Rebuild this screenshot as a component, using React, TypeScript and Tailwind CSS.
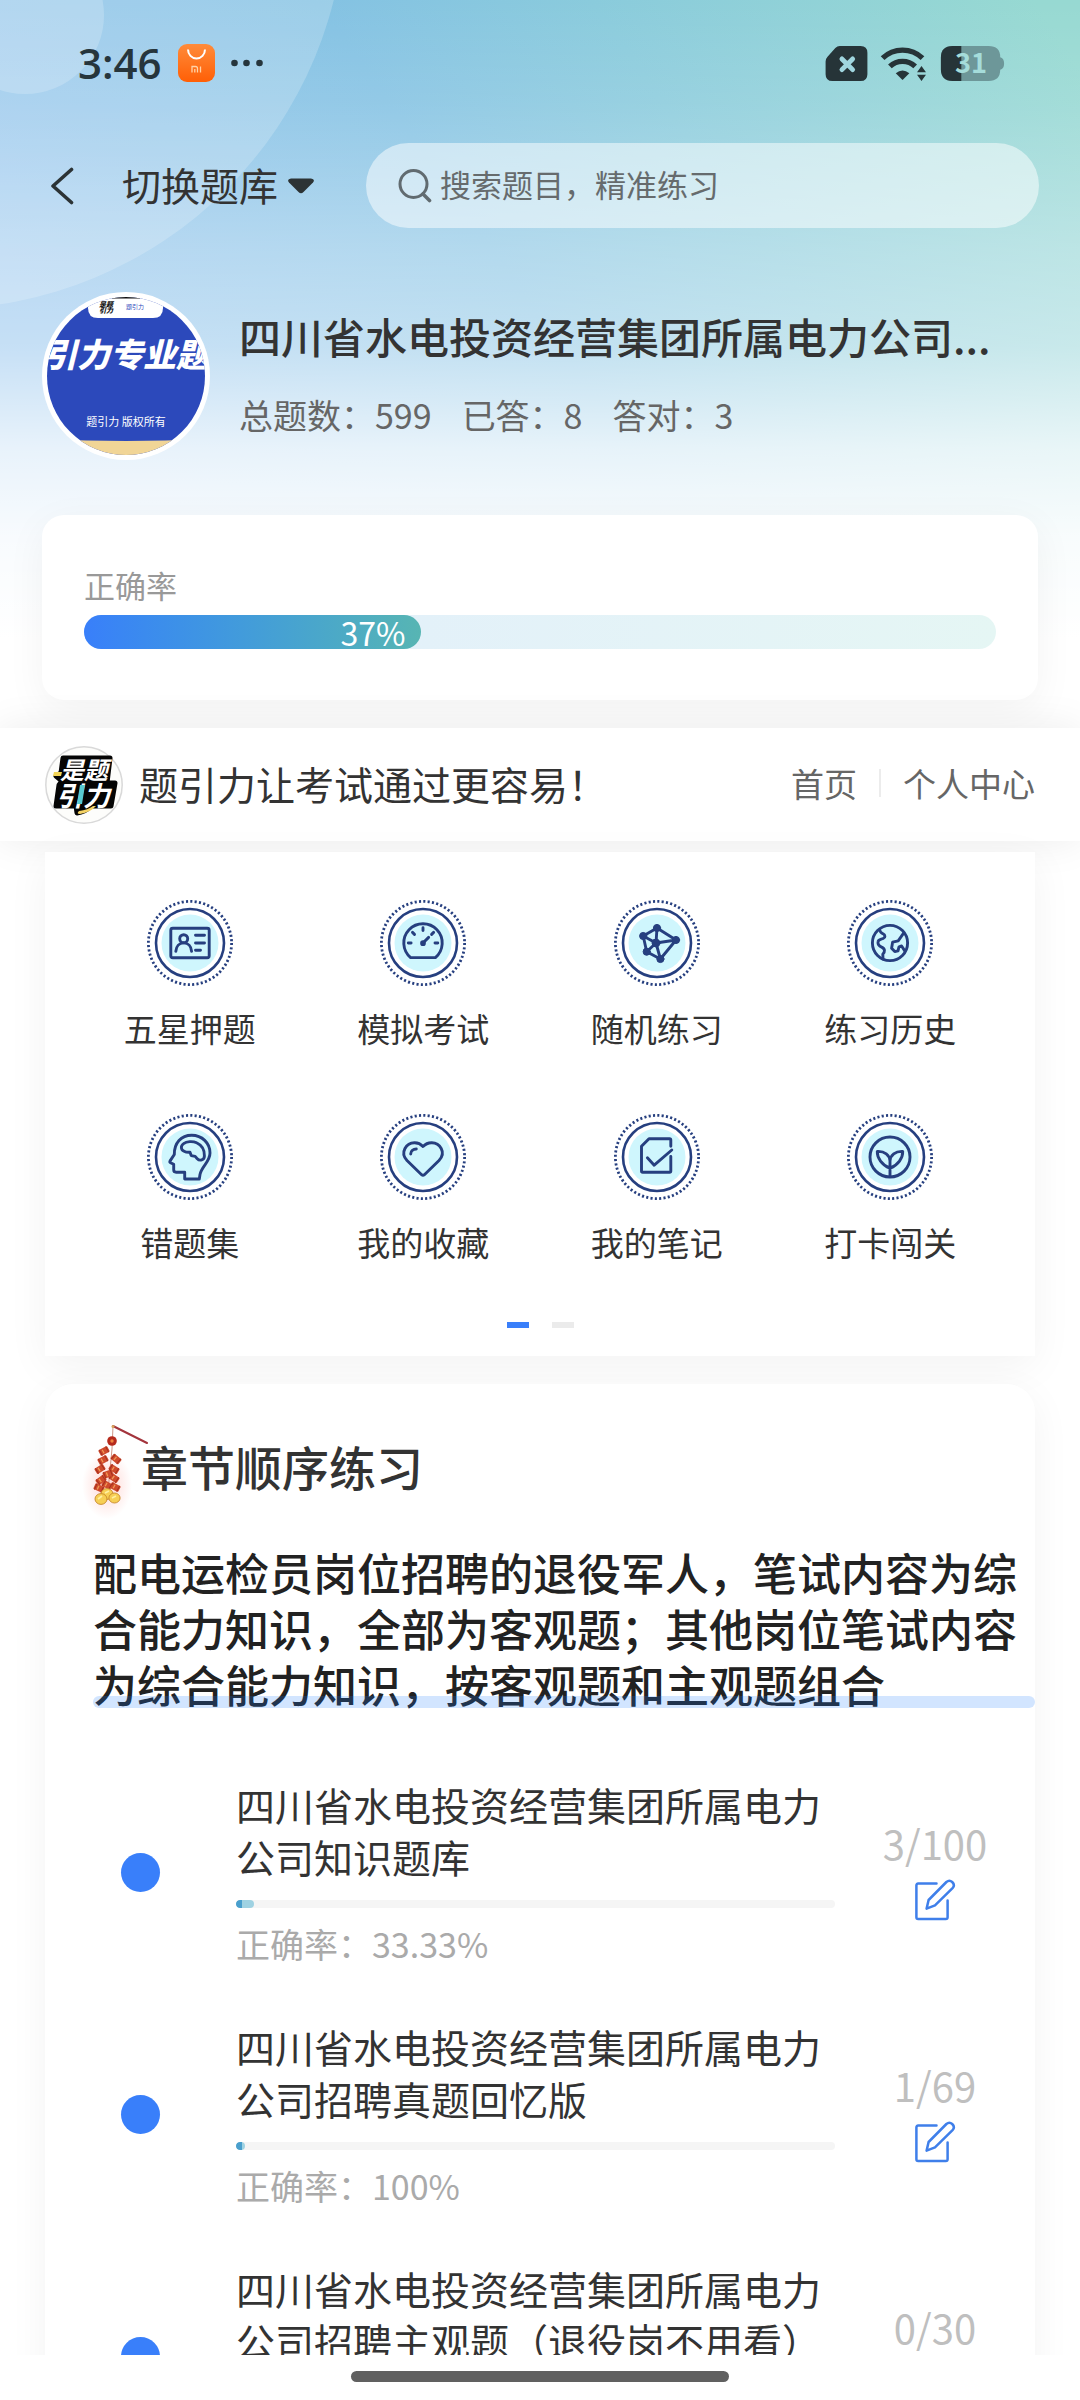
import type { ReactNode } from "react";

type Shortcut = {
  label: string;
  icon: ReactNode;
};

type Chapter = {
  title: string;
  done: number;
  total: number;
  accuracy?: string;
};

const SHORTCUTS: Shortcut[] = [
  {
    label: "五星押题",
    icon: (
      <>
        <rect x="24.8" y="29.2" width="38.4" height="29.6" rx="2" />
        <circle cx="37.7" cy="39.7" r="4" />
        <path d="M29.8 52.3c.4-5 3.6-8.4 7.9-8.4s7.5 3.4 7.9 8.4M49.5 36.3h9M49.5 44h9M49.5 51.2h5" />
      </>
    ),
  },
  {
    label: "模拟考试",
    icon: (
      <>
        <path d="M31.6 58.6a19.2 19.2 0 1 1 24.8 0z" />
        <path d="M29.3 44h2.8M56 44h2.8M44 28.8v2.8M33.5 33.4l2 2M54.6 33.4l-2 2M44 44l5.6-5.6" />
        <circle cx="44" cy="44.2" r="1.4" fill="#263f7f" />
      </>
    ),
  },
  {
    label: "随机练习",
    icon: (
      <>
        <path d="M44 29 30.2 37l3.5 15.7 13.7 7.3L63 41zM43 44l1-15M43 44l-12.8-7M43 44l20-3M43 44l4.4 16M43 44l-9.3 8.7" />
        <g fill="#263f7f" strokeWidth="1">
          <circle cx="44" cy="29" r="3.6" />
          <circle cx="30.2" cy="37" r="3.6" />
          <circle cx="63" cy="41" r="3.6" />
          <circle cx="47.4" cy="60" r="3.6" />
          <circle cx="33.7" cy="52.7" r="3.6" />
          <circle cx="43" cy="44" r="4" />
        </g>
      </>
    ),
  },
  {
    label: "练习历史",
    icon: (
      <>
        <circle cx="44" cy="44" r="17.6" />
        <path d="M33.6 30.6c.4 2.8 1.8 3.4 3.4 4.2 2.4 1.3 2.6 3.6.2 4.7-2.2 1-5 .6-5.2 3.4-.3 3.2 1.2 4.2 3.6 5.2 3.6 1.5 3.6 4.6 1.2 7.2l.2 4.6M57.6 34.2l-5.4 7.6-5.6 1.4-1 6 3.2 3.4 3.2-.8 1-4 2.6-.8 3 4.6" />
      </>
    ),
  },
  {
    label: "错题集",
    icon: (
      <>
        <path d="M38.7 66v-6.8h-8.6c-1.6 0-2.4-.8-2.4-2.4v-5.5l-3.2-1.6c-.8-.4-.8-1-.4-1.8l4.2-6.4C28.3 30 35 22.3 45.7 22.3 56 22.3 64 30 64 40c0 9-8.4 13-10 21.5l-.7 4.5z" />
        <path d="M38 38.2c-3.2-1.2-3.6-5.4-.4-7.6 3-2.2 9-2.8 13-.8 5.2 2.4 8 7.4 7.8 13.2-.1 4.2-4.6 5.4-7.4 2.4l-1.8-2-4-.8-1.2-3.4c-2 .2-4.4-.2-6-1z" />
      </>
    ),
  },
  {
    label: "我的收藏",
    icon: (
      <>
        <path d="M42.6 61.7 28 47.5C20.5 39.5 27.5 29.5 35.7 29.7c3.6.1 6.2 1.5 8.3 3.7 2.1-2.2 4.9-3.6 8.5-3.7 8.2-.2 15.2 9.8 7.5 17.8L45.4 61.7c-.9.8-1.9.8-2.8 0z" />
        <path d="M31.7 41c0-3 2.6-5 5.6-5" />
      </>
    ),
  },
  {
    label: "我的笔记",
    icon: (
      <>
        <path d="M57.8 33.2v-6.3c0-.8-.4-1.2-1.2-1.2H36l-7.5 7.6v24.7c0 .8.4 1.2 1.2 1.2h26.9c.8 0 1.2-.4 1.2-1.2V43.5" />
        <path d="m34.4 44.7 6.8 7.5 17.6-15.2" />
      </>
    ),
  },
  {
    label: "打卡闯关",
    icon: (
      <>
        <circle cx="44" cy="44" r="20" />
        <path d="M44 63.5V47M43.8 55.2C36 52 31 45 31.3 38.4 38.5 38 43.8 42 44 48M44.2 55.2C52 52 57 45 56.7 38.4 49.5 38 44.2 42 44 48" />
      </>
    ),
  },
];

const CHAPTERS: Chapter[] = [
  {
    title: "四川省水电投资经营集团所属电力公司知识题库",
    done: 3,
    total: 100,
    accuracy: "33.33%",
  },
  {
    title: "四川省水电投资经营集团所属电力公司招聘真题回忆版",
    done: 1,
    total: 69,
    accuracy: "100%",
  },
  {
    title: "四川省水电投资经营集团所属电力公司招聘主观题（退役岗不用看）",
    done: 0,
    total: 30,
    accuracy: "0%",
  },
];

export default function App() {
  return (
    <div
      lang="zh-CN"
      className="flex h-screen flex-col bg-white font-['Noto_Sans_CJK_SC',sans-serif] text-[#333]"
    >
      <main className="relative min-h-0 flex-1 overflow-x-hidden overflow-y-auto [scrollbar-width:none]">
        <HeaderBackdrop />
        <div className="relative">
          <StatusBar />
          <TopNav />
          <BankSummary />
          <AccuracyCard percent={37} />
          <BrandBar />
          <ShortcutGrid />
          <ChapterSection />
        </div>
      </main>
      <div className="flex h-[45px] flex-none justify-center bg-white pt-4">
        <div className="h-[11px] w-[35%] rounded-full bg-[#606060]" />
      </div>
    </div>
  );
}

function HeaderBackdrop() {
  return (
    <div className="absolute inset-x-0 top-0 h-[640px] overflow-hidden bg-[linear-gradient(to_bottom,rgba(255,255,255,0)_0%,rgba(255,255,255,0.12)_16%,rgba(255,255,255,0.38)_39%,rgba(255,255,255,0.5)_54%,rgba(255,255,255,0.8)_70%,rgba(255,255,255,0.94)_84%,#fff_100%),linear-gradient(55deg,#8cc0ec_18%,#84c2e3_50%,#8acbdc_68%,#97d9d2_97%)]">
      <svg width="400" height="400" viewBox="0 0 400 400" fill="#fff" aria-hidden="true">
        <circle cx="-62" cy="-99" r="408" fillOpacity="0.2" />
        <circle cx="25" cy="15" r="79" fillOpacity="0.2" />
      </svg>
    </div>
  );
}

function StatusBar() {
  return (
    <div className="flex h-[126px] items-center justify-between pr-[75px] pl-[78px] text-[#26353c]">
      <div className="flex items-center gap-4">
        <span className="font-['Open_Sans','Noto_Sans_CJK_SC',sans-serif] text-[42px] leading-[58px] font-semibold">
          3:46
        </span>
        <svg width="37" height="38" viewBox="0 0 37 38" aria-hidden="true">
          <defs>
            <linearGradient id="shop" x1="0" y1="0" x2="0" y2="1">
              <stop offset="0" stopColor="#ff8b3a" />
              <stop offset="1" stopColor="#ff5f06" />
            </linearGradient>
          </defs>
          <rect width="37" height="38" rx="9" fill="url(#shop)" />
          <path d="M10 5.5a8.5 9 0 0 0 17 0" fill="none" stroke="#fff" strokeWidth="2" />
          <path
            d="M14 28.5v-6h3.500q2 0 2 2v4M16.8 25v3.5M22.5 22.5v6"
            fill="none"
            stroke="#ffd3a8"
            strokeWidth="1.3"
          />
        </svg>
        <svg width="32" height="8" viewBox="0 0 32 8" fill="currentColor" aria-hidden="true">
          <circle cx="3.5" cy="4" r="3.3" />
          <circle cx="15.5" cy="4" r="3.3" />
          <circle cx="28.5" cy="4" r="3.3" />
        </svg>
      </div>
      <div className="flex items-center gap-3">
        <svg width="43" height="35" viewBox="0 0 43 36" aria-hidden="true">
          <path
            d="M14.5 0H36q7 0 7 7v22q0 7-7 7H7q-7 0-7-7V16q0-3 2-5l8-9q2-2 4.5-2z"
            fill="#263438"
          />
          <path
            d="m16.8 13.3 11 11m0-11-11 11"
            stroke="#a0d6df"
            strokeWidth="5"
            strokeLinecap="round"
          />
        </svg>
        <svg width="48" height="35" viewBox="0 0 48 36" aria-hidden="true">
          <g fill="none" stroke="#263438" strokeWidth="5.5">
            <path d="M2 12.5a29.5 29.5 0 0 1 41 0" />
            <path d="M9.5 21a19 19 0 0 1 26 0" />
          </g>
          <path d="M22.5 35 15.5 28q7-5.5 14 0z" fill="#263438" />
          <path d="m42 20.5 4.6 6.5h-9.2zM42 36l4.6-6.5h-9.2z" fill="#263438" />
        </svg>
        <svg width="65" height="35" viewBox="0 0 65 36" role="img" aria-label="31%">
          <path
            d="M12 0h37q12 0 12 11.5 4 1 4 6.5t-4 6.5Q61 36 49 36H12Q0 36 0 24V12Q0 0 12 0z"
            fill="#6d9799"
          />
          <path d="M12 0h9v36h-9Q0 36 0 24V12Q0 0 12 0z" fill="#263438" />
          <text
            x="31"
            y="28"
            textAnchor="middle"
            fill="#a5dcda"
            fontSize="28"
            fontWeight="700"
            fontFamily="Noto Sans CJK SC, sans-serif"
          >
            31
          </text>
        </svg>
      </div>
    </div>
  );
}

function TopNav() {
  return (
    <nav className="flex items-center pt-[17px] pr-[41px] pl-[50px]">
      <button type="button" aria-label="返回" className="flex-none">
        <svg width="24" height="38" viewBox="0 0 24 38" fill="none" aria-hidden="true">
          <path
            d="M21.5 2.5 3 19l18.5 16.5"
            stroke="#2c3335"
            strokeWidth="3.6"
            strokeLinecap="round"
            strokeLinejoin="round"
          />
        </svg>
      </button>
      <button type="button" className="ml-12 flex flex-none items-center gap-[10px]">
        <span className="pb-1 text-[39px] leading-[52px]">切换题库</span>
        <svg width="26" height="16" viewBox="0 0 26 16" fill="#2c3335" aria-hidden="true">
          <path d="M3 .5h20q4.5.5 2 4l-9.5 9.5q-2.5 2.5-5 0L1 4.5q-2.5-3.5 2-4z" />
        </svg>
      </button>
      <label className="ml-[52px] flex h-[85px] min-w-0 flex-1 items-center gap-2 rounded-full bg-white/50 pl-8 text-[#616b70]">
        <svg
          width="34"
          height="36"
          viewBox="0 0 34 36"
          fill="none"
          stroke="currentColor"
          className="flex-none"
          aria-hidden="true"
        >
          <circle cx="15.5" cy="16" r="13.5" strokeWidth="3" />
          <path d="m25 26 6.5 6.5" strokeWidth="3.6" strokeLinecap="round" />
        </svg>
        <input
          type="search"
          aria-label="搜索题目"
          placeholder="搜索题目，精准练习"
          className="min-w-0 flex-1 bg-transparent pb-1 text-[31px] leading-[48px] outline-none placeholder:text-[#666b6d]"
        />
      </label>
    </nav>
  );
}

function BankSummary() {
  return (
    <section className="flex gap-[29px] px-[42px] pt-16">
      <BankCover />
      <div className="min-w-0 flex-1 pt-[13px]">
        <h1 className="truncate text-[42px] leading-[62px] font-medium">
          四川省水电投资经营集团所属电力公司...
        </h1>
        <p className="mt-[26px] flex gap-[30px] text-[34px] leading-[44px] whitespace-nowrap text-[#666]">
          <span>总题数：599</span>
          <span>已答：8</span>
          <span>答对：3</span>
        </p>
      </div>
    </section>
  );
}

function BankCover() {
  return (
    <svg
      width="168"
      height="168"
      viewBox="0 0 168 168"
      className="flex-none"
      fontFamily="Noto Sans CJK SC, sans-serif"
      role="img"
      aria-label="引力专业题"
    >
      <defs>
        <clipPath id="cover">
          <circle cx="84" cy="84" r="79" />
        </clipPath>
      </defs>
      <circle cx="84" cy="84" r="84" fill="#fff" />
      <g clipPath="url(#cover)">
        <rect width="168" height="168" fill="#2c49bb" />
        <path d="M46 0h75v16q0 10-10 10H56Q46 26 46 16z" fill="#fff" />
        <path d="M70 5.5h28" stroke="#111" strokeWidth="2" />
        <text x="57" y="15" fontSize="7" fontWeight="900" fontStyle="italic" fill="#111">
          是题
        </text>
        <text x="57" y="21" fontSize="7" fontWeight="900" fontStyle="italic" fill="#111">
          引力
        </text>
        <text x="84" y="17" fontSize="6" fill="#2c49bb">
          题引力
        </text>
        <text x="2" y="75" fontSize="33" fontWeight="900" fontStyle="italic" fill="#fff">
          引力专业题
        </text>
        <text x="84" y="134" fontSize="11" textAnchor="middle" fill="#fff">
          题引力 版权所有
        </text>
        <path d="M0 147q84 4 168 0v21H0z" fill="#f1d596" />
      </g>
    </svg>
  );
}

function AccuracyCard({ percent }: { percent: number }) {
  return (
    <section className="mx-[42px] mt-[55px] rounded-[22px] bg-white px-[42px] pt-12 pb-[51px] shadow-[0_10px_40px_rgba(0,0,0,0.05)]">
      <h2 className="text-[31px] leading-[44px] text-[#999]">正确率</h2>
      <div
        role="progressbar"
        aria-label="正确率"
        aria-valuenow={percent}
        className="mt-2 h-[34px] rounded-full bg-linear-to-r from-[#e2eefc] to-[#e5f6f4]"
      >
        <div
          className="flex h-full items-center justify-end rounded-full bg-linear-to-r from-[#397ffa] to-[#57b5b3] pr-4 text-[32px] leading-[34px] text-white"
          style={{ width: `${percent}%` }}
        >
          {percent}%
        </div>
      </div>
    </section>
  );
}

function BrandBar() {
  return (
    <section className="mt-7 flex h-[113px] items-center bg-white px-[45px] shadow-[0_0_40px_rgba(0,0,0,0.08)]">
      <BrandLogo />
      <p className="ml-4 flex-1 pb-1 text-[39px] leading-[52px] whitespace-nowrap">
        题引力让考试通过更容易！
      </p>
      <div className="flex items-center pb-1 text-[33px] leading-[44px] whitespace-nowrap text-[#666]">
        <a href="#home">首页</a>
        <span className="mx-[22px] h-7 w-[2px] bg-[#ececec]" />
        <a href="#me">个人中心</a>
      </div>
    </section>
  );
}

function BrandLogo() {
  return (
    <svg
      width="78"
      height="78"
      viewBox="0 0 78 78"
      className="flex-none"
      fontFamily="Noto Sans CJK SC, sans-serif"
      fontWeight="700"
      fontStyle="italic"
      role="img"
      aria-label="是题引力"
    >
      <circle cx="39" cy="39" r="38.2" fill="#fdfdfb" stroke="#d9d9d9" strokeWidth="1.5" />
      <path
        d="M18 12h47l-3 25h8l-4 23H46q-6 6-14 7l-1-7H11l3-21 3-4-6-5 5-3z"
        fill="#050505"
        stroke="#050505"
        strokeWidth="5"
        strokeLinejoin="round"
      />
      <path d="M9 26h8l-1 4H8z" fill="#f2d455" />
      <path d="M34 65q9-1 14-5h3q-5 6-16 8-4 0-1-3z" fill="#f5d365" />
      <text x="15" y="33" fontSize="24" fill="#fff">
        是题
      </text>
      <text x="11" y="60" fontSize="27" fill="#fff">
        引力
      </text>
      <path d="M35 39h5l-3 19h-5z" fill="#58cbd2" />
    </svg>
  );
}

function ShortcutGrid() {
  return (
    <section className="mx-[45px] mt-[11px] bg-white px-7 pt-[47px] pb-7 shadow-[0_10px_40px_rgba(0,0,0,0.05)]">
      <div className="grid grid-cols-4 gap-y-14">
        {SHORTCUTS.map((s) => (
          <button key={s.label} type="button" className="flex flex-col items-center">
            <svg
              width="88"
              height="88"
              viewBox="0 0 88 88"
              fill="none"
              stroke="#263f7f"
              strokeWidth="2.9"
              strokeLinecap="round"
              strokeLinejoin="round"
              aria-hidden="true"
            >
              <circle
                cx="44"
                cy="44"
                r="41.6"
                strokeWidth="2.8"
                strokeLinecap="butt"
                strokeDasharray="2.1 2.256"
              />
              <circle cx="44" cy="44" r="34" strokeWidth="2.6" />
              <circle cx="44" cy="44" r="28.5" fill="#cff6fd" stroke="none" />
              {s.icon}
            </svg>
            <span className="mt-3 text-[33px] leading-[58px]">{s.label}</span>
          </button>
        ))}
      </div>
      <div className="mt-[51px] flex justify-center gap-[23px]">
        <span className="h-[6px] w-[22px] bg-[#397ffa]" />
        <span className="h-[6px] w-[22px] bg-[#ebebeb]" />
      </div>
    </section>
  );
}

function ChapterSection() {
  return (
    <section className="mx-[45px] mt-7 rounded-[28px] bg-white pt-10 pb-14 shadow-[0_10px_40px_rgba(0,0,0,0.05)]">
      <div className="flex items-center pl-12">
        <Firecracker />
        <h2 className="text-[47px] leading-[84px] font-medium">章节顺序练习</h2>
      </div>
      <p className="relative mt-9 ml-12 text-[44px] leading-[56px] font-medium text-[#222]">
        配电运检员岗位招聘的退役军人，笔试内容为综合能力知识，全部为客观题；其他岗位笔试内容为综合能力知识，按客观题和主观题组合
        <span className="absolute inset-x-0 bottom-1 h-3 rounded-full bg-[#1f7bff]/20" />
      </p>
      <ul className="mt-[66px] flex flex-col gap-[54px]">
        {CHAPTERS.map((c) => (
          <ChapterRow key={c.title} chapter={c} />
        ))}
      </ul>
    </section>
  );
}

function ChapterRow({ chapter }: { chapter: Chapter }) {
  const { title, done, total, accuracy } = chapter;
  return (
    <li className="flex items-center">
      <div className="flex w-[191px] flex-none justify-center">
        <span className="h-[39px] w-[39px] rounded-full bg-[#397ffa]" />
      </div>
      <div className="min-w-0 flex-1">
        <h3 className="text-[39px] leading-[52px]">{title}</h3>
        <div className="mt-[18px] h-2 overflow-hidden rounded-full bg-[#f5f5f5]">
          {done > 0 && (
            <div
              className="h-full min-w-[6px] rounded-full bg-[#9fd2e2]"
              style={{ width: `${(done / total) * 100}%` }}
            >
              <div className="h-full w-[6px] rounded-l-full bg-[#4a9fcd]" />
            </div>
          )}
        </div>
        <p className="mt-[14px] text-[34px] leading-[44px] text-[#aaa]">正确率：{accuracy}</p>
      </div>
      <div className="flex w-[200px] flex-none flex-col items-center gap-3 pb-1">
        <span className="text-[40px] leading-[48px] text-[#bfbfbf]">
          {done}/{total}
        </span>
        <button type="button" aria-label="开始练习">
          <svg
            width="42"
            height="42"
            viewBox="0 0 42 42"
            fill="none"
            stroke="#3f7fea"
            strokeWidth="2.5"
            strokeLinecap="round"
            strokeLinejoin="round"
            aria-hidden="true"
          >
            <path d="M22.5 4.6H4.2q-1.8 0-1.8 1.8v31.8q0 1.8 1.8 1.8h27.6q1.8 0 1.8-1.8V21.5" />
            <path d="m12.6 29.6 2-8.6L32.4 3q3-2.4 5.8 0 3 2.8.6 5.8L21 26.4z" />
          </svg>
        </button>
      </div>
    </li>
  );
}

function Firecracker() {
  // [x, y, tilt] of each tube on the string
  const tubes = [
    [11, 26, -28],
    [10, 35, -28],
    [7, 44, -32],
    [8, 55, -36],
    [6, 63, 24],
    [23, 34, 40],
    [21, 44, 32],
    [21, 53, 34],
    [22, 62, 28],
    [15, 49, -20],
    [14, 60, 30],
  ];
  return (
    <svg
      width="48"
      height="82"
      viewBox="0 0 48 82"
      className="flex-none overflow-visible"
      aria-hidden="true"
    >
      <defs>
        <radialGradient id="glow">
          <stop offset="0" stopColor="#ff8a80" stopOpacity="0.35" />
          <stop offset="1" stopColor="#ff8a80" stopOpacity="0" />
        </radialGradient>
      </defs>
      <ellipse cx="14" cy="60" rx="25" ry="34" fill="url(#glow)" />
      <path d="m20 1 34 17" stroke="#a3343c" strokeWidth="2" strokeLinecap="round" />
      <path d="M20 1 19 24 15 66" stroke="#c98a78" strokeWidth="0.9" fill="none" />
      <circle cx="20" cy="1.5" r="1.5" fill="#d8a45c" />
      <circle cx="19" cy="16" r="4.8" fill="#b62a1c" />
      <circle cx="19" cy="16" r="1.7" fill="#ee8440" />
      {tubes.map(([x, y, tilt]) => (
        <g key={`${x}-${y}`} transform={`translate(${x} ${y}) rotate(${tilt})`}>
          <rect x="-5" y="-3.2" width="10" height="6.4" rx="1" fill="#cf4a2c" />
          <path d="M-3.6-3.2v6.4M3.6-3.2v6.4" stroke="#a5301f" strokeWidth="1" />
          <path d="M-1-2v4" stroke="#f09a55" strokeWidth="1.3" />
        </g>
      ))}
      <g fill="#f6cf55" stroke="#c8892a" strokeWidth="0.9">
        <ellipse cx="14" cy="69" rx="6" ry="5.4" />
        <ellipse cx="21.5" cy="73" rx="5.6" ry="5" />
        <ellipse cx="8" cy="74" rx="6" ry="5.4" />
      </g>
      <path d="m5 74 4-3M12 68l4-2M19 73l4-2" stroke="#fff0a0" strokeWidth="1.8" />
    </svg>
  );
}
